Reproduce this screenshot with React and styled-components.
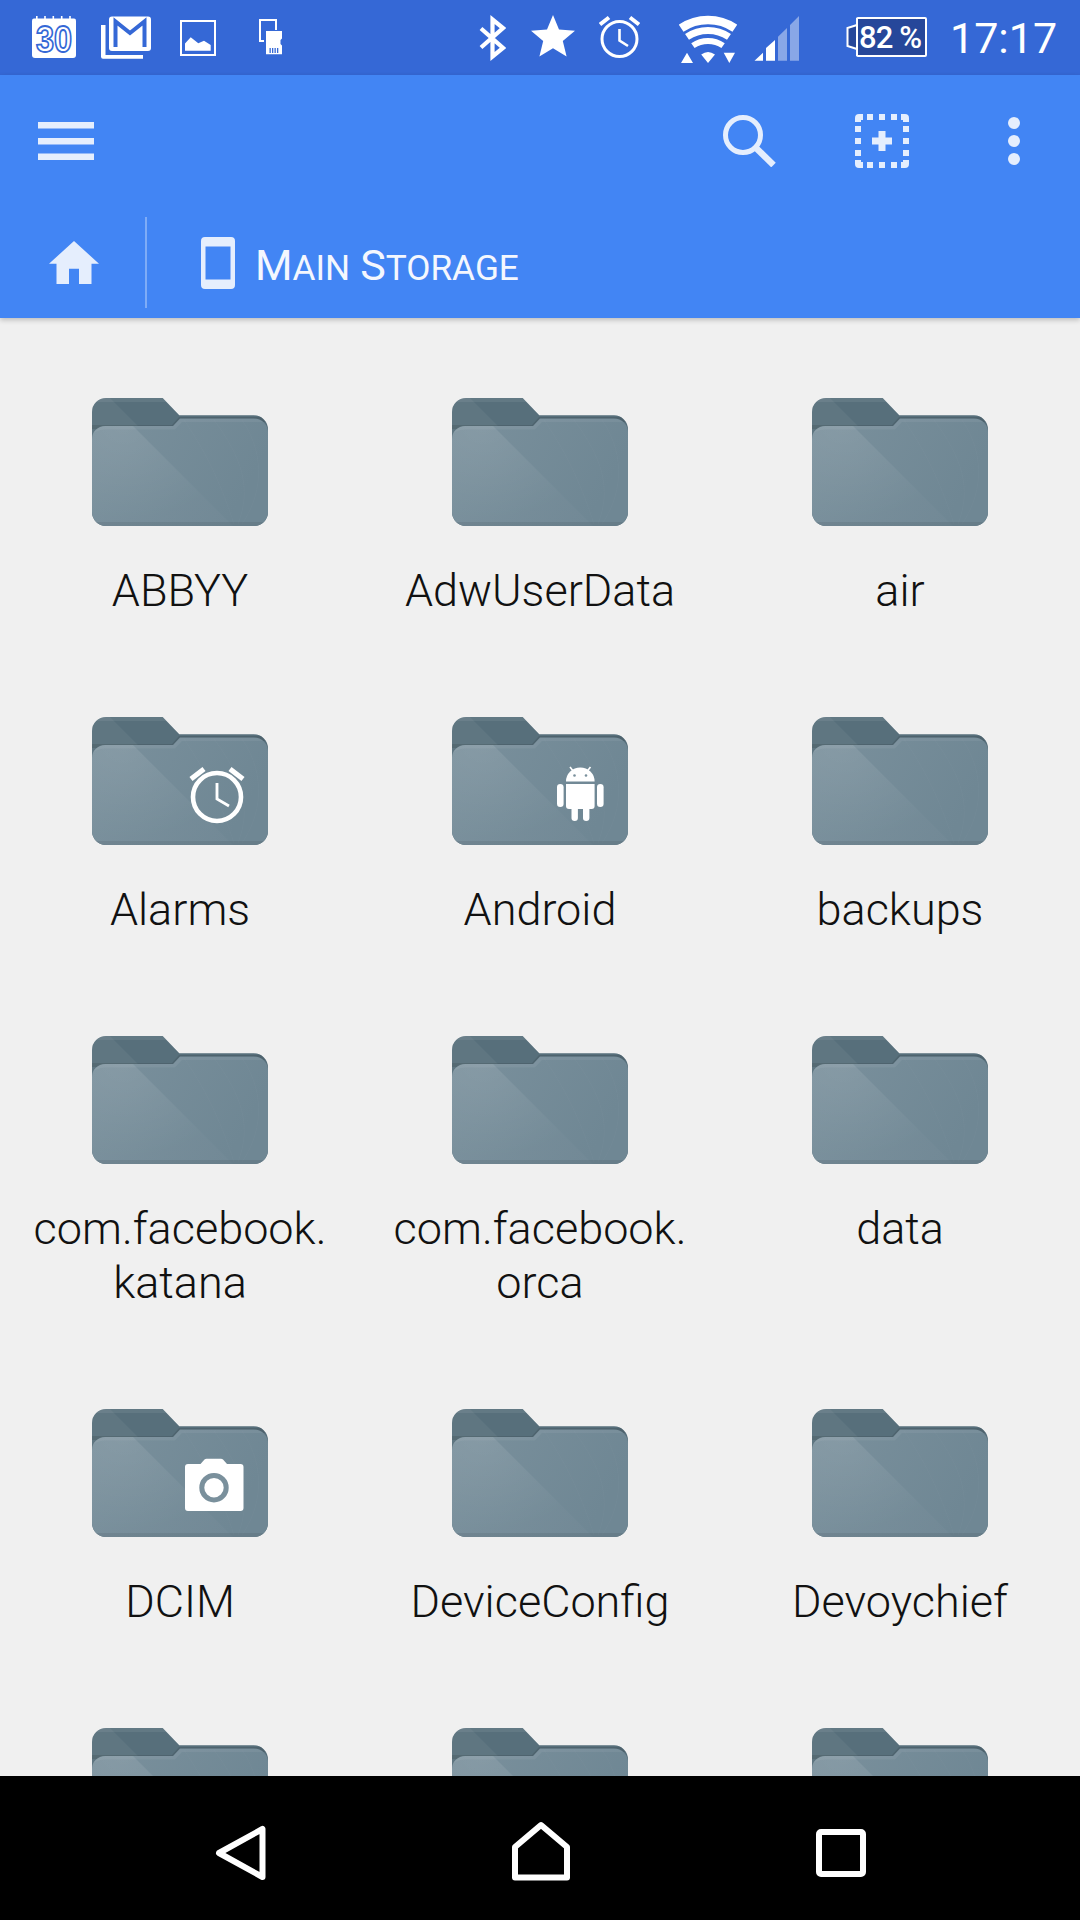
import React from "react";
import styled, { createGlobalStyle } from "styled-components";

const GlobalStyle = createGlobalStyle`
  html, body { margin: 0; padding: 0; background: #f0f0f0; }
  * { box-sizing: border-box; }
`;

const Screen = styled.div`
  width: 1080px;
  height: 1920px;
  display: flex;
  flex-direction: column;
  overflow: hidden;
  background: #f0f0f0;
  font-family: Roboto, "Liberation Sans", sans-serif;
`;

const StatusBar = styled.div`
  height: 75px;
  flex: none;
  display: flex;
  align-items: flex-start;
  background: #3568d6;
  color: #fff;
`;

const StatusIcon = styled.svg`
  flex: none;
  display: block;
  height: 75px;
  margin-left: ${(p) => p.$ml}px;
`;

const Battery = styled.div`
  flex: none;
  display: flex;
  align-items: center;
  height: 40px;
  margin: 17px 0 0 47px;
`;

const BatteryNub = styled.svg`
  flex: none;
  display: block;
  margin-right: -2px;
`;

const BatteryBody = styled.div`
  width: 71px;
  height: 40px;
  display: flex;
  align-items: center;
  justify-content: center;
  padding-right: 3px;
  background: #26479a;
  border: 2px solid #fff;
  border-radius: 2px;
  font-size: 31px;
  font-weight: 500;
  letter-spacing: -0.9px;
  white-space: pre;
`;

const Clock = styled.div`
  margin: 16px 0 0 23px;
  line-height: 45px;
  font-size: 43px;
`;

const Toolbar = styled.header`
  flex: none;
  position: relative;
  z-index: 1;
  height: 243px;
  background: #4285f4;
  box-shadow: 0 2px 5px rgba(0, 0, 0, 0.22);
`;

const ActionRow = styled.div`
  height: 132px;
  display: flex;
  align-items: center;
  padding: 0 60px 0 38px;
`;

const ActionIcon = styled.svg`
  flex: none;
  display: block;
  color: #e5eefd;
  margin-left: ${(p) => p.$ml || 0};
`;

const CrumbRow = styled.div`
  height: 111px;
  display: flex;
  align-items: center;
  padding-left: 49px;
`;

const CrumbDivider = styled.div`
  width: 2px;
  height: 91px;
  margin: 0 54px 0 46px;
  background: rgba(255, 255, 255, 0.32);
`;

const CrumbTitle = styled.div`
  display: flex;
  gap: 10px;
  margin: 7px 0 0 20px;
  color: #f4f7fe;
  font-size: 35.2px;
  line-height: 50px;
  text-transform: uppercase;
`;

const CrumbWord = styled.span`
  display: block;
  &::first-letter {
    font-size: 43px;
  }
`;

const FolderGrid = styled.main`
  flex: 1;
  min-height: 0;
  overflow: hidden;
  display: grid;
  grid-template-columns: repeat(3, 360px);
  align-content: start;
  padding-top: 80px;
`;

const Tile = styled.div`
  display: flex;
  flex-direction: column;
  align-items: center;
  padding-bottom: 99px;
`;

const FolderArt = styled.svg`
  display: block;
  flex: none;
`;

const Label = styled.div`
  margin-top: 38px;
  color: #111;
  font-size: 45px;
  font-weight: 300;
  line-height: 54px;
  text-align: center;
`;

const NavBar = styled.nav`
  height: 144px;
  flex: none;
  display: flex;
  align-items: flex-start;
  gap: 246px;
  padding: 45px 0 0 215px;
  background: #000;
`;

const NavIcon = styled.svg`
  display: block;
  flex: none;
  margin-top: ${(p) => p.$mt}px;
`;

const arc = (r, cx = 29, cy = 68, a = 34) => {
  const rad = (a * Math.PI) / 180;
  const dx = r * Math.sin(rad);
  const dy = r * Math.cos(rad);
  return `M${cx - dx} ${cy - dy}A${r} ${r} 0 0 1 ${cx + dx} ${cy - dy}`;
};

function AlarmGlyph({ cx, cy, r, sw }) {
  const k = r / 24;
  return (
    <g fill="none" stroke="#fff" strokeWidth={sw}>
      <circle cx={cx} cy={cy} r={r} />
      <path d={`M${cx} ${cy - 14 * k}V${cy + 2 * k}L${cx + 12 * k} ${cy + 9 * k}`} strokeWidth={sw * 0.62} />
      <path d={`M${cx - 26 * k} ${cy - 18 * k}L${cx - 13 * k} ${cy - 28 * k}M${cx + 13 * k} ${cy - 28 * k}L${cx + 26 * k} ${cy - 18 * k}`} strokeWidth={sw * 1.1} />
    </g>
  );
}

function FolderBadge({ type }) {
  if (type === "alarm") return <AlarmGlyph cx={125} cy={80} r={24} sw={4.6} />;
  if (type === "android") {
    return (
      <g fill="#fff">
        <path d="M114 64.5a14.3 14 0 0 1 28.6 0z" />
        <path d="M114 67h28.6v22a3 3 0 0 1-3 3H117a3 3 0 0 1-3-3z" />
        <rect x="105" y="67" width="6.6" height="23" rx="3.3" />
        <rect x="145" y="67" width="6.6" height="23" rx="3.3" />
        <rect x="119.5" y="88" width="6.4" height="16" rx="3.2" />
        <rect x="131" y="88" width="6.4" height="16" rx="3.2" />
        <path d="M118 50l3.5 4.5M138.5 50l-3.5 4.5" stroke="#fff" strokeWidth="1.6" />
        <circle cx="122.5" cy="58.5" r="1.3" fill="#7a909c" />
        <circle cx="134" cy="58.5" r="1.3" fill="#7a909c" />
      </g>
    );
  }
  if (type === "camera") {
    return (
      <g>
        <path d="M96 55h12.500l4-4.500a3 3 0 0 1 2-0.800h14.500a3 3 0 0 1 2 0.800l4 4.500h13.500a3 3 0 0 1 3 3v41a3 3 0 0 1-3 3H96a3 3 0 0 1-3-3V58a3 3 0 0 1 3-3z" fill="#fff" />
        <circle cx="122" cy="78.700" r="12.200" fill="#fff" stroke="#7a909c" strokeWidth="5" />
      </g>
    );
  }
  if (type === "wide") return <rect x="97" y="48" width="51" height="30" rx="2" fill="#fff" />;
  if (type === "narrow") return <rect x="120" y="48" width="14" height="30" rx="2" fill="#fff" />;
  return null;
}

function Folder({ badge }) {
  return (
    <FolderArt width="176" height="128" viewBox="0 0 176 128">
      <defs>
        <linearGradient id="frontFill" x1="0" y1="0" x2="1" y2="0.4">
          <stop offset="0" stopColor="#7b919d" />
          <stop offset="1" stopColor="#6f8794" />
        </linearGradient>
        <radialGradient id="sheen" cx="0.22" cy="0.08" r="0.85">
          <stop offset="0" stopColor="#fff" stopOpacity="0.1" />
          <stop offset="1" stopColor="#fff" stopOpacity="0.02" />
        </radialGradient>
        <clipPath id="backClip">
          <path d="M14 0H70.700L87.300 17.300H162a14 14 0 0 1 14 14V114a14 14 0 0 1-14 14H14a14 14 0 0 1-14-14V14A14 14 0 0 1 14 0z" />
        </clipPath>
        <clipPath id="frontClip">
          <path d="M13 28H81L88 20.500H162a14 14 0 0 1 14 14V114a14 14 0 0 1-14 14H14a14 14 0 0 1-14-14V41A13 13 0 0 1 13 28z" />
        </clipPath>
      </defs>
      <g clipPath="url(#backClip)">
        <rect width="176" height="128" fill="#576f7b" />
        <rect width="176" height="4" fill="#fff" opacity="0.07" />
        <path d="M0 0H18L46 28V50H0z" fill="#fff" opacity="0.05" />
        <path d="M0 27H80L87 19H176V24H90L83 31H0z" fill="#000" opacity="0.1" />
      </g>
      <g clipPath="url(#frontClip)">
        <rect width="176" height="128" fill="url(#frontFill)" />
        <path d="M0 20H33L141 128H0z" fill="url(#sheen)" />
        <path d="M92 22C118 60 130 90 142 126M122 22C150 60 160 90 146 126M150 22C176 60 168 100 150 126" fill="none" stroke="#fff" strokeWidth="1" opacity="0.025" />
        <path d="M0 32C0 29 8 28 13 28H81L88 20.500H176V24H90L83 31.500H13C6 31.500 0 36 0 36z" fill="#fff" opacity="0.06" />
        <rect y="124" width="176" height="4" fill="#000" opacity="0.07" />
      </g>
      <FolderBadge type={badge} />
    </FolderArt>
  );
}

const folders = [
  { name: ["ABBYY"] },
  { name: ["AdwUserData"] },
  { name: ["air"] },
  { name: ["Alarms"], badge: "alarm" },
  { name: ["Android"], badge: "android" },
  { name: ["backups"] },
  { name: ["com.facebook.", "katana"] },
  { name: ["com.facebook.", "orca"] },
  { name: ["data"] },
  { name: ["DCIM"], badge: "camera" },
  { name: ["DeviceConfig"] },
  { name: ["Devoychief"] },
  { name: [] },
  { name: [], badge: "wide" },
  { name: [], badge: "narrow" },
];

function StatusIcons() {
  return (
    <>
      <StatusIcon $ml={32} width="44" viewBox="32 0 44 75">
        <path d="M35 18.500h39a2 2 0 0 1 2 2V55a3 3 0 0 1-3 3H35a3 3 0 0 1-3-3V20.500a2 2 0 0 1 2-2z" fill="#fff" />
        <path d="M36 16h1.600v3H36zM44.200 16h1.600v3h-1.600zM52.500 16h1.600v3h-1.600zM60.900 16h1.600v3h-1.600zM69.200 16h1.600v3h-1.600z" fill="#fff" />
        <text x="36" y="51.500" fontFamily="'Liberation Sans', sans-serif" fontSize="36" fontWeight="700" fill="#fff" stroke="#3568d6" strokeWidth="1.800" textLength="36" lengthAdjust="spacingAndGlyphs">30</text>
      </StatusIcon>
      <StatusIcon $ml={25} width="50" viewBox="101 0 50 75">
        <path d="M101 25h4.500v30H143v3.700h-40a2 2 0 0 1-2-2z" fill="#fff" />
        <rect x="109" y="16.500" width="42" height="34.500" rx="3" fill="#fff" />
        <path d="M115.500 47V21.500L130 33l14.500-11.500V47" fill="none" stroke="#3568d6" strokeWidth="4" />
      </StatusIcon>
      <StatusIcon $ml={29} width="36" viewBox="180 0 36 75">
        <rect x="181" y="21" width="34" height="34" fill="none" stroke="#fff" strokeWidth="2" />
        <path d="M185 50.700V43.500L190.700 37.300L198.300 43.300L204 40.700L210.700 45V50.700z" fill="#fff" />
      </StatusIcon>
      <StatusIcon $ml={43} width="24" viewBox="259 0 24 75">
        <path d="M264 41H260V20H276V30" fill="none" stroke="#fff" strokeWidth="2" />
        <path d="M266 31H282V38.500L280.500 40V44L282 45.500V54.300H266z" fill="#fff" />
        <path d="M269.500 48h1.300v5h-1.300zM272 48h1.300v5H272zM274.500 48h1.300v5h-1.300zM277 48h1.300v5H277z" fill="#3568d6" />
      </StatusIcon>
      <StatusIcon $ml={196} width="27" viewBox="478 0 27 75">
        <path d="M480 28.500L502 48L491.500 56.500V19.500L502 28L480 47.500" fill="none" stroke="#fff" strokeWidth="4.200" />
      </StatusIcon>
      <StatusIcon $ml={25} width="44" viewBox="530 0 44 75">
        <path d="M552 15l6 14.500 16 1.200-12.200 10.200 3.800 15.600-13.600-8.300-13.600 8.300 3.800-15.600L530 30.700l16-1.200z" fill="#fff" />
      </StatusIcon>
      <StatusIcon $ml={24} width="42" viewBox="598 0 42 75">
        <circle cx="618.500" cy="39" r="17.500" fill="none" stroke="#fff" strokeWidth="3" />
        <path d="M618.500 29V40.500L627 46" fill="none" stroke="#fff" strokeWidth="2.600" />
        <path d="M599 24.500L608 17.500M629 17.500L638 24.500" fill="none" stroke="#fff" strokeWidth="4" />
      </StatusIcon>
      <StatusIcon $ml={38} width="58" viewBox="0 0 58 75">
        <g fill="none" stroke="#fff">
          <path d={arc(48)} strokeWidth="8.400" />
          <path d={arc(37.500)} strokeWidth="7" />
          <path d={arc(27)} strokeWidth="6" />
        </g>
        <path d="M2 63L8 52.700L14 63zM44.700 52.700H56L50.300 63zM22.200 54.500Q29 49.500 36 54.500L29 63z" fill="#fff" />
      </StatusIcon>
      <StatusIcon $ml={17} width="45" viewBox="753 0 45 75">
        <path d="M753.500 60.700L762 52.700V60.700zM765 48L774 40V60.700H765z" fill="#fff" />
        <path d="M777 36.700L786 28V60.700H777zM789 25L798 16V60.700H789z" fill="#fff" opacity="0.42" />
      </StatusIcon>
      <Battery>
        <BatteryNub width="12" height="40" viewBox="0 0 12 40">
          <path d="M11 1V8L1.500 11V29L11 32V39" fill="#26479a" stroke="#fff" strokeWidth="2" />
        </BatteryNub>
        <BatteryBody>82 %</BatteryBody>
      </Battery>
      <Clock>17:17</Clock>
    </>
  );
}

export default function App() {
  return (
    <Screen>
      <GlobalStyle />
      <StatusBar>
        <StatusIcons />
      </StatusBar>
      <Toolbar>
        <ActionRow>
          <ActionIcon width="56" height="38" viewBox="0 0 56 38" fill="currentColor">
            <rect width="56" height="6.500" />
            <rect y="16" width="56" height="6.500" />
            <rect y="31.500" width="56" height="6.500" />
          </ActionIcon>
          <ActionIcon $ml="auto" width="53" height="52" viewBox="0 0 53 52">
            <circle cx="20" cy="20" r="17.500" fill="none" stroke="currentColor" strokeWidth="5" />
            <path d="M32 32L50.500 50" fill="none" stroke="currentColor" strokeWidth="6.500" />
          </ActionIcon>
          <ActionIcon $ml="79px" width="54" height="54" viewBox="0 0 54 54" fill="currentColor">
            <path d="M4 0H8V6H6V8H0V4a4 4 0 0 1 4-4zM46 0H50a4 4 0 0 1 4 4V8H48V6H46zM0 46H6V48H8V54H4a4 4 0 0 1-4-4zM48 46H54V50a4 4 0 0 1-4 4H46V48H48z" />
            {[12, 24, 36].map((p) => (
              <React.Fragment key={p}>
                <rect x={p} width="6" height="6" />
                <rect x={p} y="48" width="6" height="6" />
                <rect y={p} width="6" height="6" />
                <rect x="48" y={p} width="6" height="6" />
              </React.Fragment>
            ))}
            <path d="M23.500 17H30.500V23.500H37V30.500H30.500V37H23.500V30.500H17V23.500H23.500z" />
          </ActionIcon>
          <ActionIcon $ml="99px" width="12" height="48" viewBox="0 0 12 48" fill="currentColor">
            <circle cx="6" cy="6" r="6" />
            <circle cx="6" cy="24" r="6" />
            <circle cx="6" cy="42" r="6" />
          </ActionIcon>
        </ActionRow>
        <CrumbRow>
          <ActionIcon width="50" height="43" viewBox="2 3 20 17" preserveAspectRatio="none" fill="currentColor">
            <path d="M10 20v-6h4v6h5v-8h3L12 3 2 12h3v8z" />
          </ActionIcon>
          <CrumbDivider />
          <ActionIcon width="34" height="52" viewBox="0 0 34 52" fill="currentColor">
            <path fillRule="evenodd" d="M4 0H30a4 4 0 0 1 4 4V48a4 4 0 0 1-4 4H4a4 4 0 0 1-4-4V4a4 4 0 0 1 4-4zM4.500 9.500V42.500H29.500V9.500z" />
          </ActionIcon>
          <CrumbTitle>
            <CrumbWord>Main</CrumbWord>
            <CrumbWord>Storage</CrumbWord>
          </CrumbTitle>
        </CrumbRow>
      </Toolbar>
      <FolderGrid>
        {folders.map((f, i) => (
          <Tile key={i}>
            <Folder badge={f.badge} />
            {f.name.length > 0 && (
              <Label>
                {f.name.map((line) => (
                  <div key={line}>{line}</div>
                ))}
              </Label>
            )}
          </Tile>
        ))}
      </FolderGrid>
      <NavBar>
        <NavIcon $mt={4} width="51" height="56" viewBox="0 0 51 56">
          <path d="M47.500 4V52L4 28z" fill="none" stroke="#fff" strokeWidth="6" strokeLinejoin="round" />
        </NavIcon>
        <NavIcon $mt={0} width="58" height="60" viewBox="0 0 58 60">
          <path d="M29 4L55 26V56.500H3V26z" fill="none" stroke="#fff" strokeWidth="6" strokeLinejoin="round" />
        </NavIcon>
        <NavIcon $mt={8} width="50" height="48" viewBox="0 0 50 48">
          <rect x="3" y="3" width="44" height="42" rx="2" fill="none" stroke="#fff" strokeWidth="6" />
        </NavIcon>
      </NavBar>
    </Screen>
  );
}
